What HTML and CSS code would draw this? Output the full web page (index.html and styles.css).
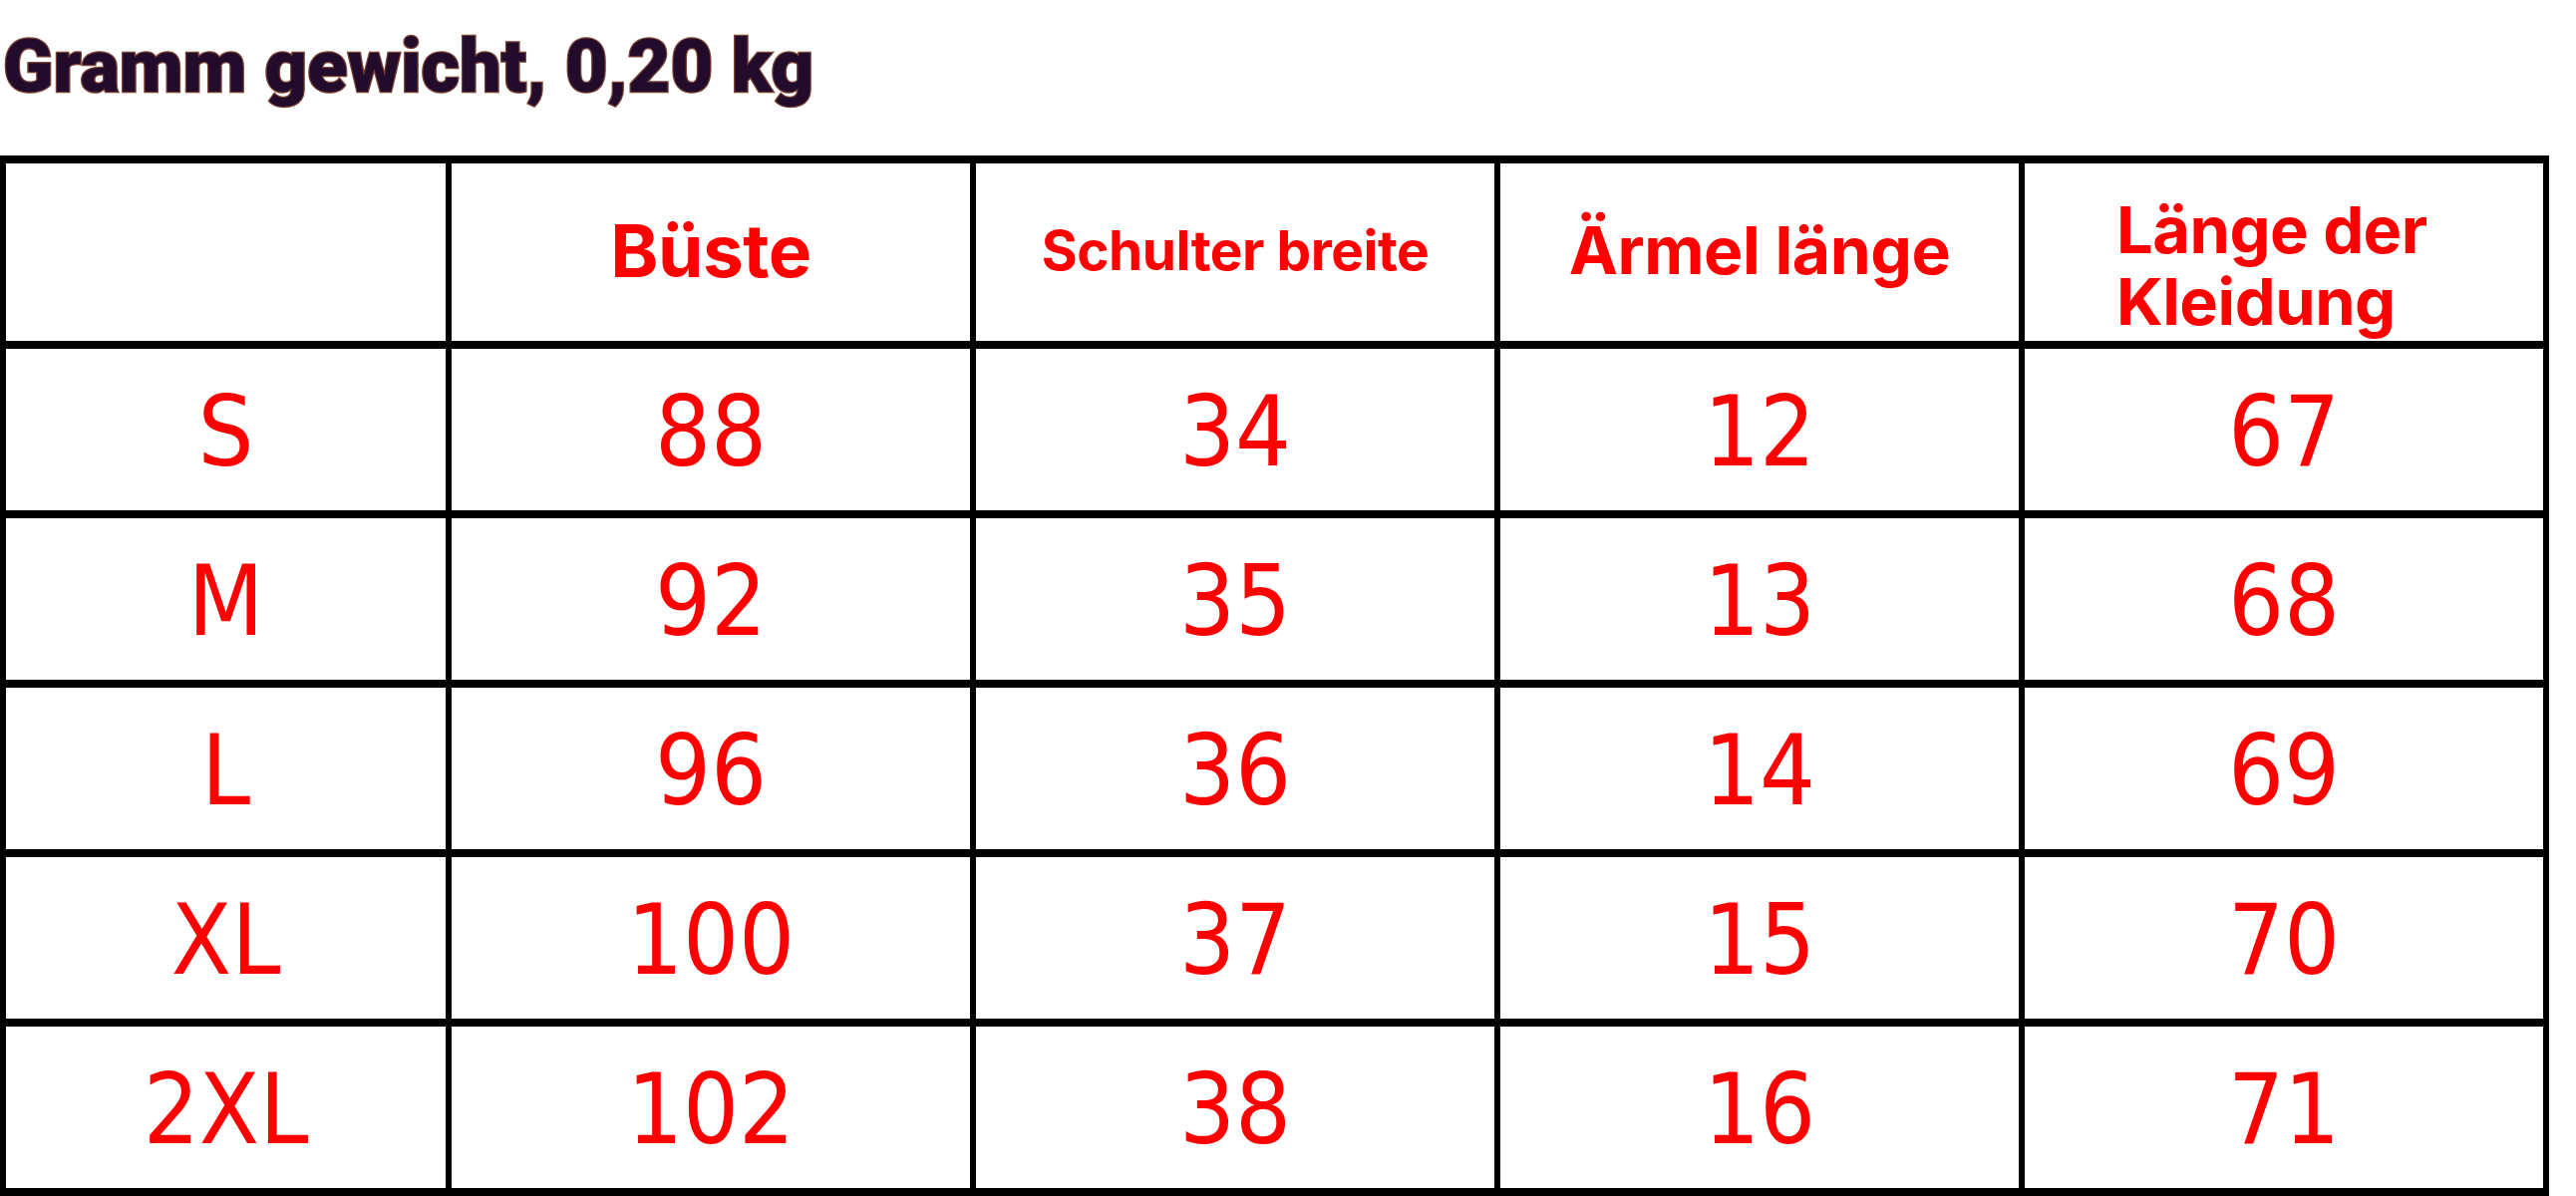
FILE: index.html
```html
<!DOCTYPE html>
<html lang="de">
<head>
<meta charset="utf-8">
<title>Größentabelle</title>
<link rel="stylesheet" href="styles.css">
</head>
<body>
<h1 class="title">Gramm gewicht, 0,20 kg</h1>
<div class="size-table">
  <div class="cell head"></div>
  <div class="cell head h-buste">Büste</div>
  <div class="cell head h-schulter">Schulter breite</div>
  <div class="cell head h-aermel">Ärmel länge</div>
  <div class="cell head h-laenge"><span>Länge der<br>Kleidung</span></div>

  <div class="cell">S</div><div class="cell">88</div><div class="cell">34</div><div class="cell">12</div><div class="cell">67</div>
  <div class="cell">M</div><div class="cell">92</div><div class="cell">35</div><div class="cell">13</div><div class="cell">68</div>
  <div class="cell">L</div><div class="cell">96</div><div class="cell">36</div><div class="cell">14</div><div class="cell">69</div>
  <div class="cell">XL</div><div class="cell">100</div><div class="cell">37</div><div class="cell">15</div><div class="cell">70</div>
  <div class="cell">2XL</div><div class="cell">102</div><div class="cell">38</div><div class="cell">16</div><div class="cell">71</div>
</div>
</body>
</html>
```
FILE: styles.css
```css
html, body {
  margin: 0;
  padding: 0;
  background: #ffffff;
}

body {
  width: 2584px;
  height: 1200px;
  overflow: hidden;
  font-family: "Inter", "Liberation Sans", sans-serif;
}

.title {
  margin: 0 0 53px 0;
  padding: 30px 0 0 3px;
  height: 73px;
  font-family: "Roboto", "Liberation Sans", sans-serif;
  font-weight: 900;
  font-size: 74px;
  line-height: 73px;
  letter-spacing: 0;
  color: #230b2c;
  -webkit-text-stroke: 2.5px #7a4332;
  paint-order: stroke fill;
  white-space: nowrap;
}

.size-table {
  display: grid;
  grid-template-columns: 441px repeat(4, 520px);
  grid-template-rows: 178px repeat(5, 162px);
  column-gap: 6px;
  row-gap: 8px;
  padding: 8px 6px;
  width: max-content;
  background: #000000;
}

.cell {
  background: #ffffff;
  display: flex;
  align-items: center;
  justify-content: center;
  padding-top: 4px;
  color: #ff0000;
  font-family: "DejaVu Sans Condensed", "DejaVu Sans", "Verdana", sans-serif;
  font-stretch: condensed;
  font-size: 98px;
  line-height: 1;
}

.head {
  font-family: "Inter", "Liberation Sans", sans-serif;
  font-stretch: normal;
  font-weight: 700;
  color: #ff0000;
  padding-top: 0;
  padding-bottom: 4px;
  letter-spacing: -0.5px;
}

.h-buste {
  font-size: 73px;
}

.h-schulter {
  font-size: 55px;
}

.h-aermel {
  font-size: 66px;
}

.h-laenge {
  font-size: 65px;
  line-height: 72px;
  justify-content: flex-start;
  text-align: left;
  padding: 28px 0 0 92px;
}
```
